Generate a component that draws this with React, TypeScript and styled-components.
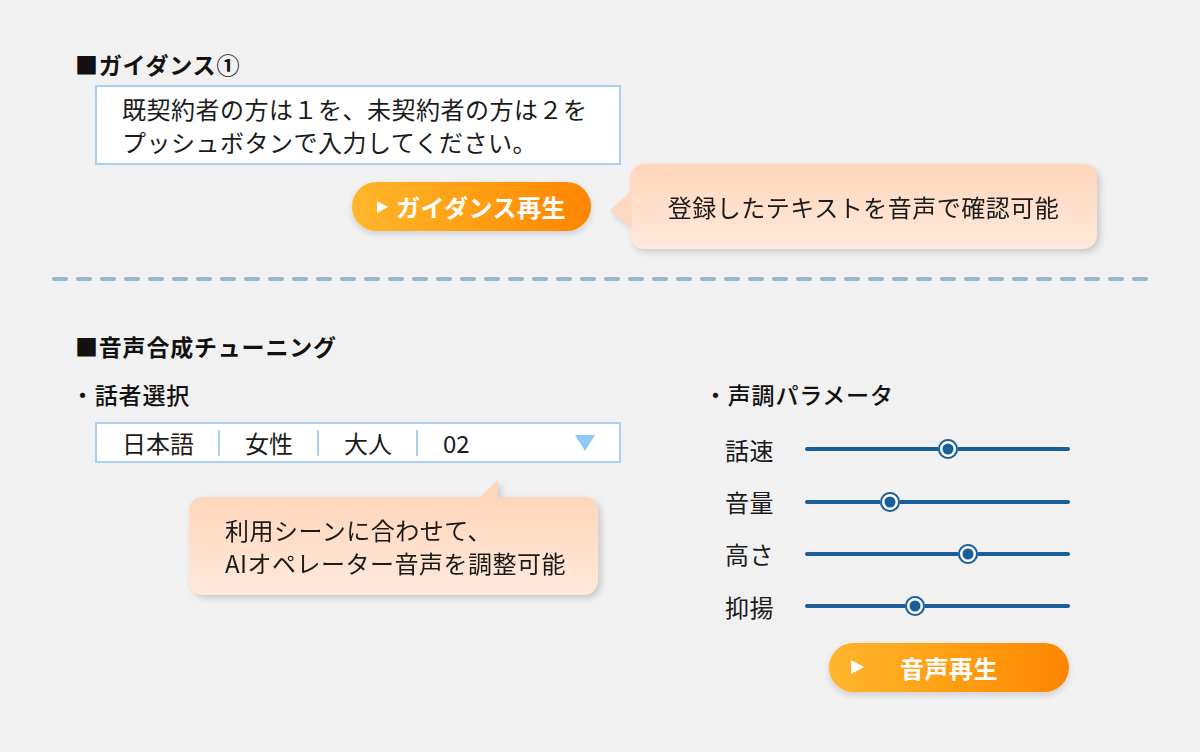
import React from "react";
import styled, { createGlobalStyle } from "styled-components";

const GlobalStyle = createGlobalStyle`
  html, body { margin: 0; padding: 0; }
  body {
    background: #f1f1f1;
    font-family: "Noto Sans CJK JP", "Noto Sans", sans-serif;
    color: #1b1b1b;
  }
`;

const Page = styled.div`
  width: 1200px;
  height: 752px;
  box-sizing: border-box;
  padding: 49px 52px 0;
  overflow: hidden;
`;

const Section = styled.section`
  padding-left: 23px;
`;

const Heading = styled.h2`
  margin: 0;
  font-size: 23px;
  font-weight: 700;
  line-height: 30px;
  letter-spacing: 0.8px;
  color: #111;
`;

const TextBox = styled.div`
  margin: 6px 0 0 20px;
  width: 526px;
  height: 80px;
  box-sizing: border-box;
  border: 2px solid #a9d0f2;
  background: #fff;
  padding: 5px 0 0 25px;
  font-size: 24px;
  line-height: 33px;
  letter-spacing: 0.5px;
`;

const ActionRow = styled.div`
  margin-top: -1px;
  display: flex;
  align-items: center;
  gap: 39px;
  padding-left: 277px;
`;

const PlayButton = styled.button<{ $width: number; $spread?: boolean }>`
  width: ${(p) => p.$width}px;
  height: 49px;
  border: none;
  border-radius: 25px;
  background: linear-gradient(90deg, #ffb62c 0%, #ff9d12 55%, #ff8500 100%);
  box-shadow: 0 3px 6px rgba(0, 0, 0, 0.14);
  color: #fff;
  font-family: inherit;
  font-size: 24px;
  font-weight: 700;
  letter-spacing: 0.5px;
  cursor: pointer;
  padding: ${(p) => (p.$spread ? "0 22px" : "0")};
  display: ${(p) => (p.$spread ? "grid" : "flex")};
  grid-template-columns: 1fr auto 1fr;
  align-items: center;
  justify-content: center;
  gap: 8px;
`;

const PlayIcon = styled.span`
  justify-self: start;
  width: 0;
  height: 0;
  border-top: 6px solid transparent;
  border-bottom: 6px solid transparent;
  border-left: 11px solid #fff;
`;

const PlayIconLarge = styled(PlayIcon)`
  border-top-width: 7px;
  border-bottom-width: 7px;
  border-left-width: 13px;
`;

const Bubble = styled.div<{ $width: number; $height: number }>`
  position: relative;
  width: ${(p) => p.$width}px;
  height: ${(p) => p.$height}px;
  box-sizing: border-box;
  border-radius: 14px;
  background: linear-gradient(180deg, #ffd6bb 0%, #ffe9dc 100%);
  filter: drop-shadow(3px 3px 3px rgba(0, 0, 0, 0.16));
  font-size: 24px;
  line-height: 33px;
  letter-spacing: 0.5px;
  display: flex;
  align-items: center;
`;

const SideArrow = styled.span`
  position: absolute;
  left: -20px;
  top: 26px;
  width: 22px;
  height: 38px;
  background: #ffd8bf;
  clip-path: polygon(0 54%, 100% 0, 100% 100%);
`;

const UpArrow = styled.span`
  position: absolute;
  left: 290px;
  top: -17px;
  width: 19px;
  height: 18px;
  background: #ffd6bb;
  clip-path: polygon(100% 0, 100% 100%, 0 100%);
`;

const CenterText = styled.div`
  width: 100%;
  text-align: center;
`;

const LeftText = styled.div`
  padding-left: 36px;
`;

const Divider = styled.svg`
  display: block;
  margin-top: 28px;
`;

const Section2 = styled(Section)`
  margin-top: 50px;
`;

const Columns = styled.div`
  margin-top: 18px;
  display: flex;
`;

const LeftColumn = styled.div`
  width: 633px;
`;

const RightColumn = styled.div`
  flex: 1;
`;

const SubHeading = styled.h3`
  margin: 0 0 0 -4px;
  font-size: 23px;
  font-weight: 500;
  line-height: 30px;
  letter-spacing: 0.8px;
  color: #111;
`;

const Select = styled.div`
  margin: 13px 0 0 20px;
  width: 526px;
  height: 41px;
  box-sizing: border-box;
  border: 2px solid #a9d0f2;
  background: #fff;
  display: flex;
  align-items: center;
  position: relative;
  font-size: 24px;
`;

const SelectItem = styled.span<{ $last?: boolean }>`
  padding: 0 24px 0 25px;
  line-height: 26px;
  border-right: ${(p) => (p.$last ? "none" : "2px solid #a9d0f2")};
`;

const Caret = styled.span`
  margin-left: auto;
  margin-right: 24px;
  width: 0;
  height: 0;
  border-left: 10px solid transparent;
  border-right: 10px solid transparent;
  border-top: 16px solid #90c8f7;
`;

const Bubble2Wrap = styled.div`
  margin: 34px 0 0 114px;
`;

const Sliders = styled.div`
  margin-top: 14px;
  padding-left: 17px;
  display: flex;
  flex-direction: column;
`;

const SliderRow = styled.div`
  height: 52.4px;
  display: flex;
  align-items: center;
`;

const SliderLabel = styled.span`
  width: 80px;
  font-size: 24px;
  letter-spacing: 0.5px;
`;

const Track = styled.div`
  position: relative;
  width: 265px;
  height: 4px;
  border-radius: 2px;
  background: #1a5e99;
`;

const Knob = styled.span`
  position: absolute;
  top: 50%;
  width: 20px;
  height: 20px;
  margin: -10px 0 0 -10px;
  border-radius: 50%;
  background: #1a5e99;
  box-shadow: inset 0 0 0 2px #1a5e99, inset 0 0 0 4.5px #fff;
`;

const ButtonWrap = styled.div`
  margin: 10px 0 0 121px;
`;

const sliders = [
  { label: "話速", value: 0.54 },
  { label: "音量", value: 0.32 },
  { label: "高さ", value: 0.615 },
  { label: "抑揚", value: 0.415 },
];

export default function App() {
  return (
    <>
      <GlobalStyle />
      <Page>
        <Section>
          <Heading>■ガイダンス①</Heading>
          <TextBox>
            既契約者の方は１を、未契約者の方は２を
            <br />
            プッシュボタンで入力してください。
          </TextBox>
          <ActionRow>
            <PlayButton $width={239}>
              <PlayIcon />
              <span>ガイダンス再生</span>
            </PlayButton>
            <Bubble $width={467} $height={85}>
              <SideArrow />
              <CenterText>登録したテキストを音声で確認可能</CenterText>
            </Bubble>
          </ActionRow>
        </Section>

        <Divider width="1096" height="4" viewBox="0 0 1096 4">
          <line
            x1="2"
            y1="2"
            x2="1094"
            y2="2"
            stroke="#93b7d0"
            strokeWidth="4"
            strokeLinecap="round"
            strokeDasharray="12 12"
          />
        </Divider>

        <Section2>
          <Heading>■音声合成チューニング</Heading>
          <Columns>
            <LeftColumn>
              <SubHeading>・話者選択</SubHeading>
              <Select>
                <SelectItem>日本語</SelectItem>
                <SelectItem>女性</SelectItem>
                <SelectItem>大人</SelectItem>
                <SelectItem $last>02</SelectItem>
                <Caret />
              </Select>
              <Bubble2Wrap>
                <Bubble $width={409} $height={98}>
                  <UpArrow />
                  <LeftText>
                    利用シーンに合わせて、
                    <br />
                    AIオペレーター音声を調整可能
                  </LeftText>
                </Bubble>
              </Bubble2Wrap>
            </LeftColumn>
            <RightColumn>
              <SubHeading>・声調パラメータ</SubHeading>
              <Sliders>
                {sliders.map((s) => (
                  <SliderRow key={s.label}>
                    <SliderLabel>{s.label}</SliderLabel>
                    <Track>
                      <Knob style={{ left: `${s.value * 100}%` }} />
                    </Track>
                  </SliderRow>
                ))}
              </Sliders>
              <ButtonWrap>
                <PlayButton $width={240} $spread>
                  <PlayIconLarge />
                  <span>音声再生</span>
                  <span />
                </PlayButton>
              </ButtonWrap>
            </RightColumn>
          </Columns>
        </Section2>
      </Page>
    </>
  );
}
